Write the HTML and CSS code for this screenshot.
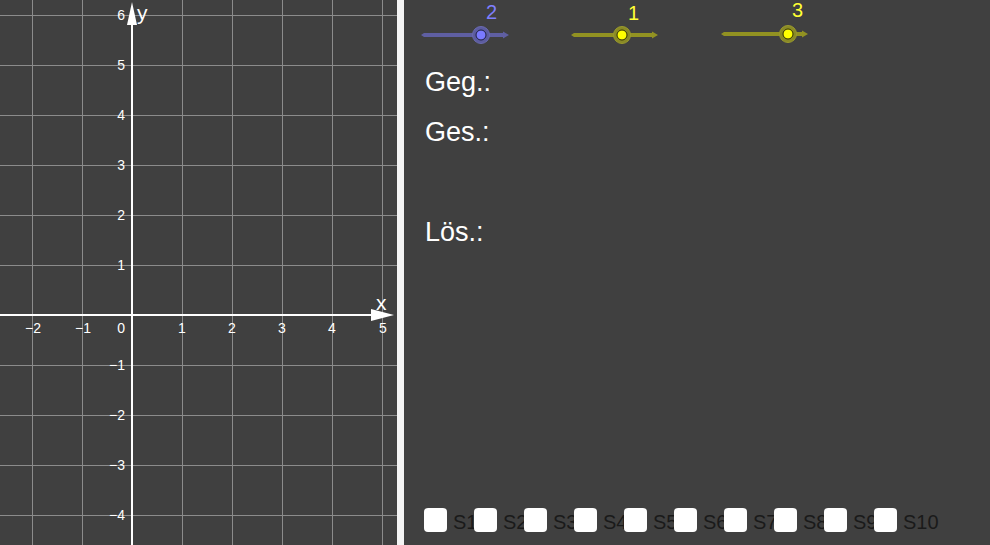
FILE: index.html
```html
<!DOCTYPE html>
<html lang="de">
<head>
<meta charset="utf-8">
<title>GeoGebra</title>
<link rel="stylesheet" href="styles.css">
</head>
<body>
<div class="app">
  <div class="graph">
    <svg class="graph-svg" width="397" height="545" viewBox="0 0 397 545">
      <g class="grid">
        <line x1="32.5" y1="0" x2="32.5" y2="545"/>
        <line x1="82.5" y1="0" x2="82.5" y2="545"/>
        <line x1="182.5" y1="0" x2="182.5" y2="545"/>
        <line x1="232.5" y1="0" x2="232.5" y2="545"/>
        <line x1="282.5" y1="0" x2="282.5" y2="545"/>
        <line x1="332.5" y1="0" x2="332.5" y2="545"/>
        <line x1="382.5" y1="0" x2="382.5" y2="545"/>
        <line x1="0" y1="15.5" x2="397" y2="15.5"/>
        <line x1="0" y1="65.5" x2="397" y2="65.5"/>
        <line x1="0" y1="115.5" x2="397" y2="115.5"/>
        <line x1="0" y1="165.5" x2="397" y2="165.5"/>
        <line x1="0" y1="215.5" x2="397" y2="215.5"/>
        <line x1="0" y1="265.5" x2="397" y2="265.5"/>
        <line x1="0" y1="365.5" x2="397" y2="365.5"/>
        <line x1="0" y1="415.5" x2="397" y2="415.5"/>
        <line x1="0" y1="465.5" x2="397" y2="465.5"/>
        <line x1="0" y1="515.5" x2="397" y2="515.5"/>
      </g>
      <g class="axes">
        <rect x="131" y="20" width="2" height="525"/>
        <polygon points="132,2 127,25 137,25"/>
        <rect x="0" y="314" width="375" height="2"/>
        <polygon points="394,315 371,309 371,321"/>
      </g>
      <g class="ticks-x">
        <text x="33" y="333">−2</text>
        <text x="83" y="333">−1</text>
        <text x="182" y="333">1</text>
        <text x="232" y="333">2</text>
        <text x="282" y="333">3</text>
        <text x="332" y="333">4</text>
        <text x="383" y="333">5</text>
      </g>
      <g class="ticks-y">
        <text x="125" y="333">0</text>
        <text x="125" y="20">6</text>
        <text x="125" y="70">5</text>
        <text x="125" y="120">4</text>
        <text x="125" y="170">3</text>
        <text x="125" y="220">2</text>
        <text x="125" y="270">1</text>
        <text x="125" y="370">−1</text>
        <text x="125" y="420">−2</text>
        <text x="125" y="470">−3</text>
        <text x="125" y="520">−4</text>
      </g>
      <text class="axis-label" x="137" y="20">y</text>
      <text class="axis-label" x="376" y="310">x</text>
    </svg>
  </div>
  <div class="divider"></div>
  <div class="algebra">
    <svg class="sliders" width="586" height="57" viewBox="0 0 586 57">
      <g class="slider slider-blue">
        <path class="track" d="M20,33 L99,33 L99,31.5 L105,35 L99,38.5 L99,37 L20,37 L17,35 Z"/>
        <circle class="halo" cx="77" cy="35" r="8.5"/>
        <circle class="knob" cx="77" cy="35" r="5"/>
        <text class="value" x="82" y="19">2</text>
      </g>
      <g class="slider slider-yellow">
        <path class="track" d="M170,33 L248,33 L248,31.5 L254,35 L248,38.5 L248,37 L170,37 L167,35 Z"/>
        <circle class="halo" cx="218" cy="35" r="8.5"/>
        <circle class="knob" cx="218" cy="35" r="5"/>
        <text class="value" x="224" y="20">1</text>
      </g>
      <g class="slider slider-yellow">
        <path class="track" d="M320,32 L398,32 L398,30.5 L404,34 L398,37.5 L398,36 L320,36 L317,34 Z"/>
        <circle class="halo" cx="384" cy="34" r="8.5"/>
        <circle class="knob" cx="384" cy="34" r="5"/>
        <text class="value" x="388" y="17">3</text>
      </g>
    </svg>
    <div class="notes">
      <div class="note-line">Geg.:</div>
      <div class="note-line">Ges.:</div>
      <div class="note-line"></div>
      <div class="note-line">Lös.:</div>
    </div>
    <div class="checks">
      <div class="check"><span class="box"></span><span class="check-label">S1</span></div>
      <div class="check"><span class="box"></span><span class="check-label">S2</span></div>
      <div class="check"><span class="box"></span><span class="check-label">S3</span></div>
      <div class="check"><span class="box"></span><span class="check-label">S4</span></div>
      <div class="check"><span class="box"></span><span class="check-label">S5</span></div>
      <div class="check"><span class="box"></span><span class="check-label">S6</span></div>
      <div class="check"><span class="box"></span><span class="check-label">S7</span></div>
      <div class="check"><span class="box"></span><span class="check-label">S8</span></div>
      <div class="check"><span class="box"></span><span class="check-label">S9</span></div>
      <div class="check"><span class="box"></span><span class="check-label">S10</span></div>
    </div>
  </div>
</div>
</body>
</html>
```

FILE: styles.css
```css
html, body {
  margin: 0;
  padding: 0;
  background: #404040;
  overflow: hidden;
}

.app {
  display: flex;
  width: 990px;
  height: 545px;
  font-family: "Liberation Sans", Arial, sans-serif;
}

.graph {
  width: 397px;
  height: 545px;
  background: #404040;
  flex: none;
}

.graph-svg {
  display: block;
}

.grid line {
  stroke: #8c8c8c;
  stroke-width: 1;
}

.axes rect,
.axes polygon {
  fill: #ffffff;
}

.ticks-x text,
.ticks-y text {
  fill: #ffffff;
  font-family: "Liberation Sans", Arial, sans-serif;
  font-size: 14px;
}

.ticks-x text {
  text-anchor: middle;
}

.ticks-y text {
  text-anchor: end;
}

.axis-label {
  fill: #ffffff;
  font-family: "Liberation Sans", Arial, sans-serif;
  font-size: 21px;
}

.divider {
  width: 7px;
  flex: none;
  background: #f4f4f4;
}

.algebra {
  flex: 1;
  display: flex;
  flex-direction: column;
  background: #404040;
}

.sliders {
  display: block;
  flex: none;
}

.slider .value {
  font-family: "Liberation Sans", Arial, sans-serif;
  font-size: 20px;
}

.slider-blue .track { fill: #5f5fa2; }
.slider-blue .halo { fill: #5c5ca0; stroke: #6a6ab0; stroke-width: 1; }
.slider-blue .knob { fill: #7a7aff; stroke: #1e1e40; stroke-width: 1; }
.slider-blue .value { fill: #7f7fff; }

.slider-yellow .track { fill: #929222; }
.slider-yellow .halo { fill: #8a8a26; stroke: #9a9a2c; stroke-width: 1; }
.slider-yellow .knob { fill: #ffff00; stroke: #2e2e00; stroke-width: 1; }
.slider-yellow .value { fill: #ffff33; }

.notes {
  padding-left: 21px;
  color: #ffffff;
  font-size: 27px;
}

.note-line {
  height: 50px;
  line-height: 50px;
}

.checks {
  margin-top: auto;
  display: flex;
  padding-left: 20px;
  padding-bottom: 11px;
}

.check {
  width: 50px;
  flex: none;
  display: flex;
  align-items: flex-start;
  white-space: nowrap;
}

.box {
  position: relative;
  z-index: 1;
  width: 23px;
  height: 24px;
  background: #ffffff;
  border-radius: 4px;
  flex: none;
}

.check-label {
  margin-left: 6px;
  padding-top: 2px;
  font-size: 20px;
  line-height: 24px;
  color: #1a1a1a;
}
```
